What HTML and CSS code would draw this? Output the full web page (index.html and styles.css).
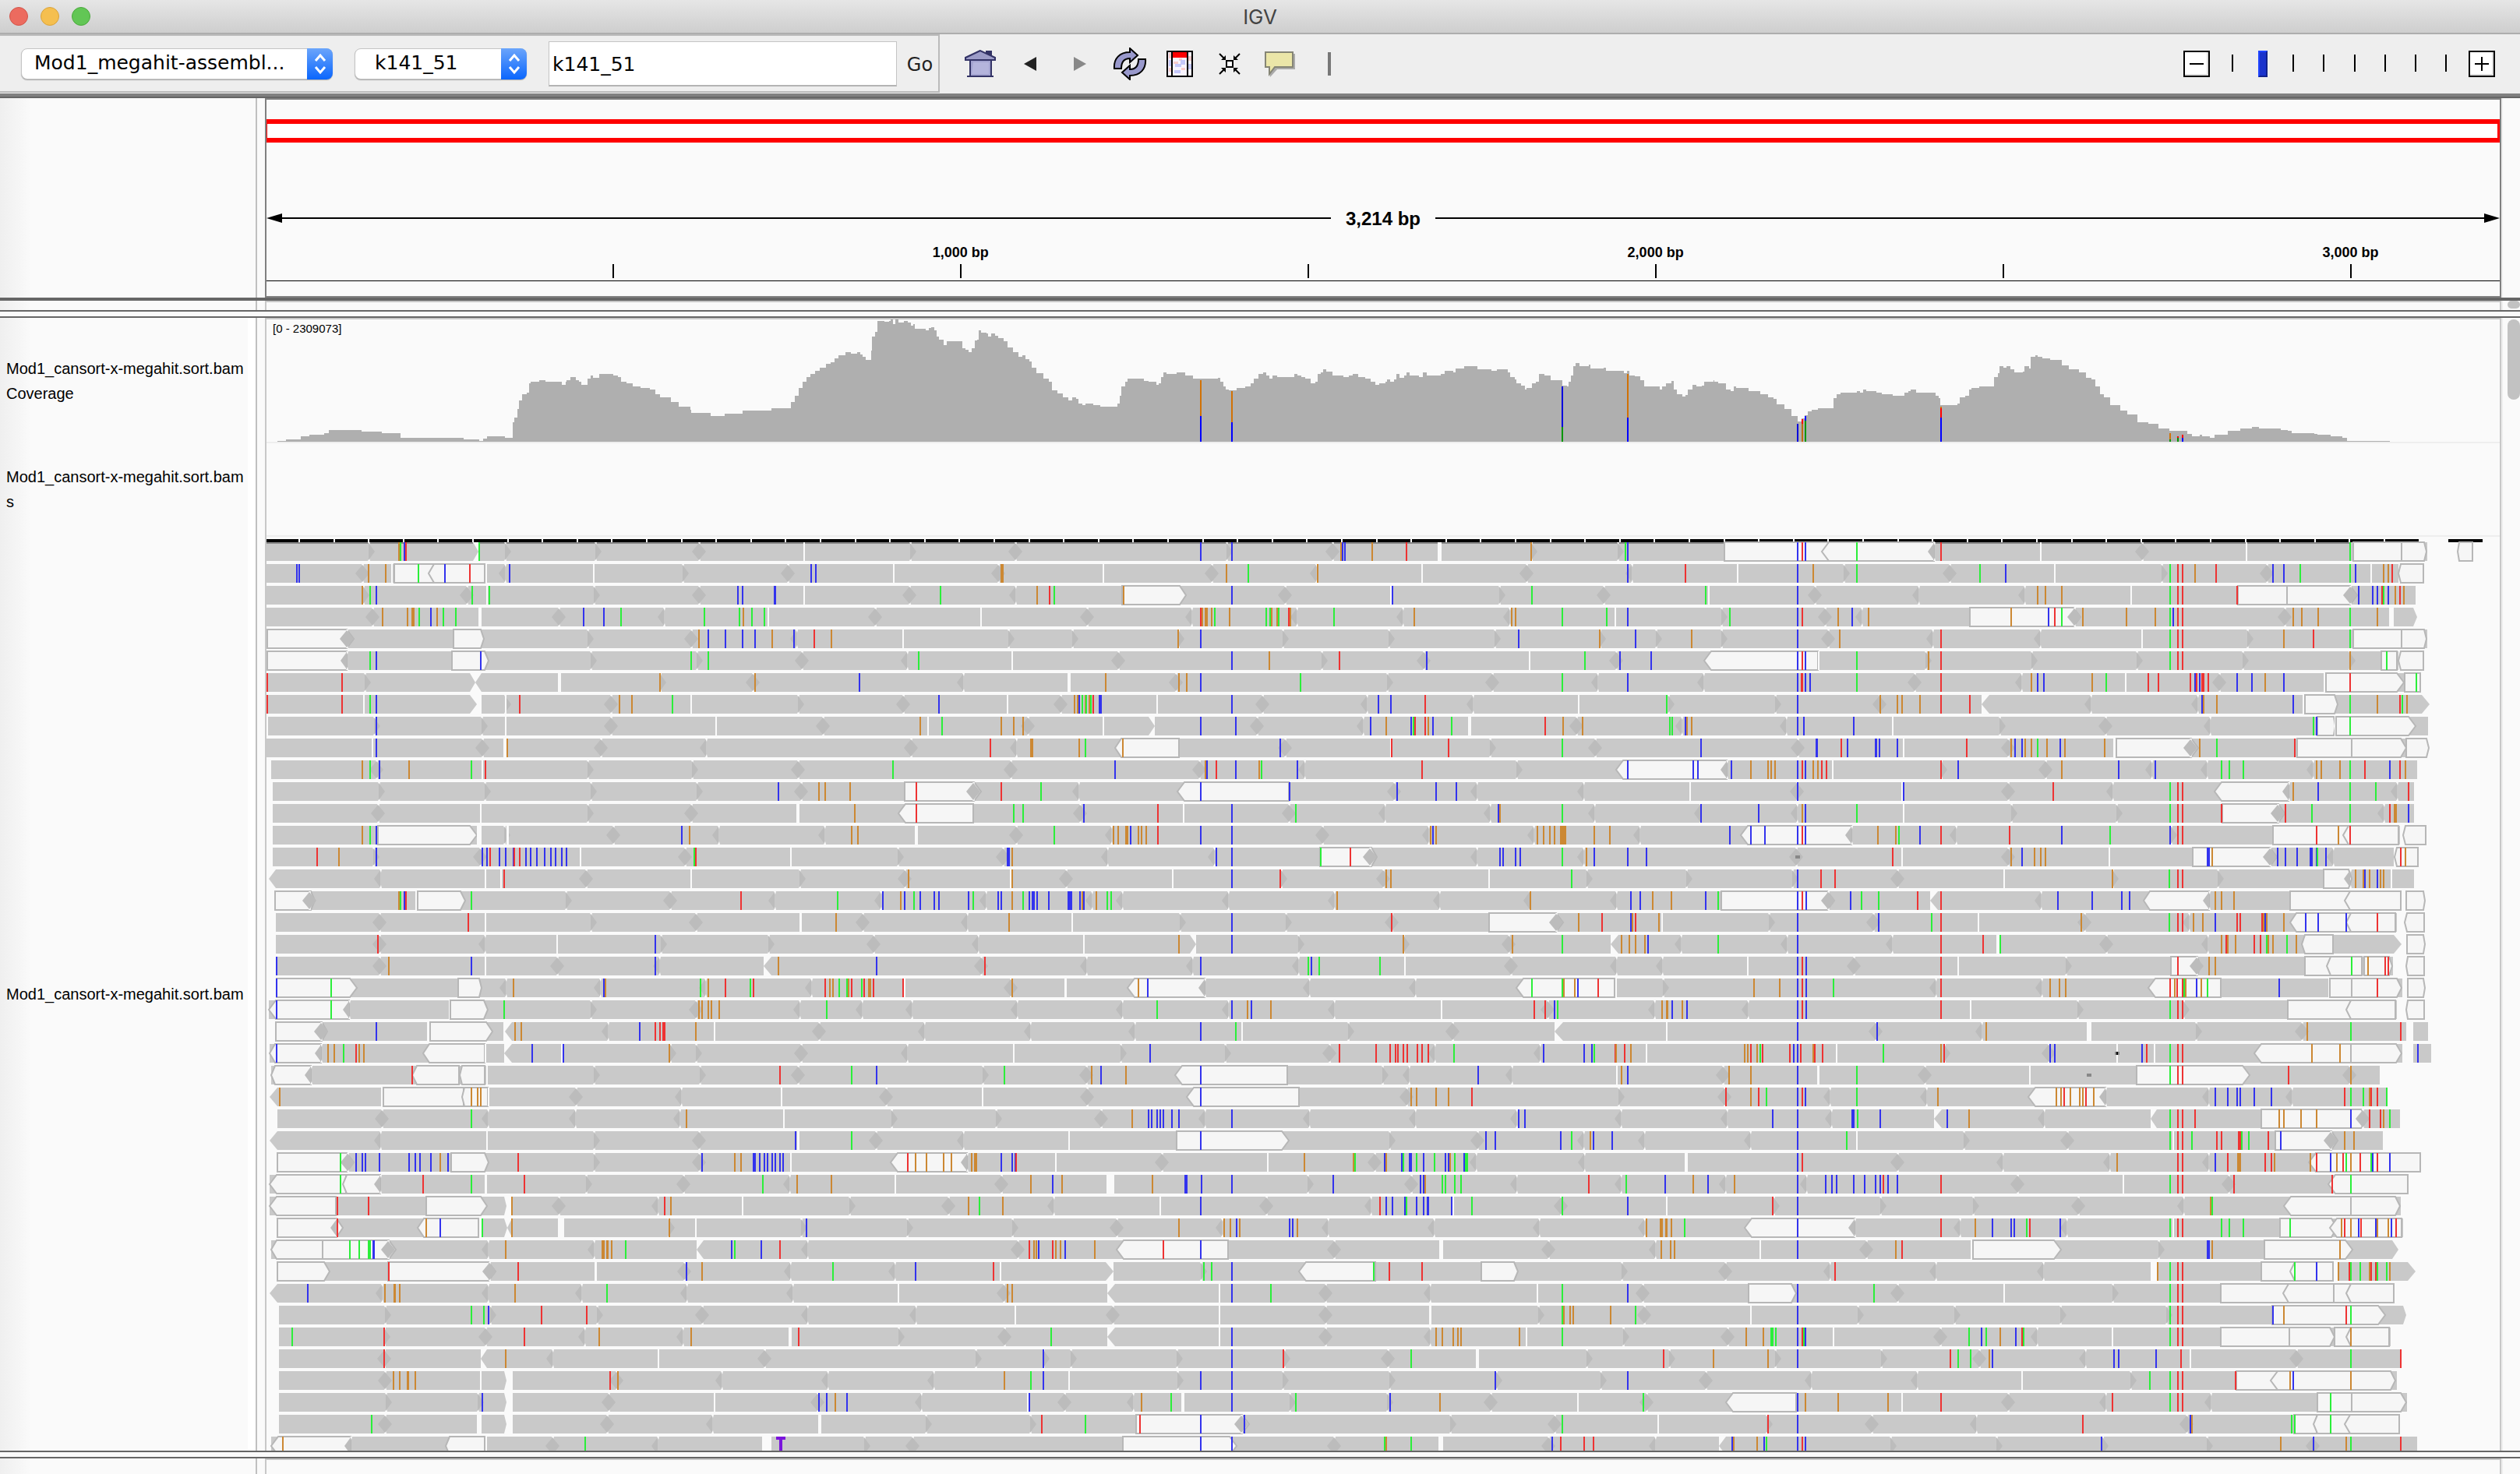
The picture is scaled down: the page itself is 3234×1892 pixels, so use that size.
FILE: index.html
```html
<!DOCTYPE html>
<html lang="en">
<head>
<meta charset="utf-8">
<title>IGV</title>
<link rel="stylesheet" href="styles.css">
</head>
<body>
<header class="titlebar">
  <div class="lights"><span class="light close"></span><span class="light minimise"></span><span class="light expand"></span></div>
  <h1 class="title">IGV</h1>
</header>

<div class="toolbar">
  <div class="locator">
    <div class="combo combo-genome">
      <select class="combo-select" aria-label="Genome"><option>Mod1_megahit-assembl...</option></select>
      <svg class="combo-arrows" viewBox="0 0 33 40" aria-hidden="true"><path d="M11 16l6-7 6 7M11 24l6 7 6-7"/></svg>
    </div>
    <div class="combo combo-chromosome">
      <select class="combo-select" aria-label="Chromosome"><option>k141_51</option></select>
      <svg class="combo-arrows" viewBox="0 0 33 40" aria-hidden="true"><path d="M11 16l6-7 6 7M11 24l6 7 6-7"/></svg>
    </div>
    <form class="search">
      <input class="search-box" type="text" value="k141_51" aria-label="Locus">
      <button class="go" type="button">Go</button>
    </form>
  </div>

  <div class="tools">
    <button class="tool" type="button" aria-label="Home">
      <svg width="42" height="38" viewBox="0 0 42 38"><path d="M7 15h28v19H7z" fill="#a3a3d0"/><path d="M12 17h20v15H10z" fill="#b4b4dc"/><path d="M28 2h8v10h-8z" fill="#333366"/><path d="M21 2L2 11v3h38v-3z" fill="#9c9cc8" stroke="#333366" stroke-width="2"/><path d="M8 15v19M35 15v19M4 35h34" stroke="#333366" stroke-width="2"/></svg>
    </button>
    <button class="tool" type="button" aria-label="Back">
      <svg width="18" height="18" viewBox="0 0 18 18"><path d="M17 0v18L1 9z" fill="#222"/></svg>
    </button>
    <button class="tool" type="button" aria-label="Forward">
      <svg width="18" height="18" viewBox="0 0 18 18"><path d="M1 0v18l16-9z" fill="#888"/></svg>
    </button>
    <button class="tool" type="button" aria-label="Refresh">
      <svg width="44" height="42" viewBox="0 0 44 42"><g fill="#9999cc" stroke="#000" stroke-width="2"><path d="M2 27C1 14 9 6 22 6V1l10 9-10 9v-5c-7 0-11 4-11 13z"/><path d="M42 15c1 13-7 21-20 21v5l-10-9 10-9v5c7 0 11-4 11-13z"/></g></svg>
    </button>
    <button class="tool" type="button" aria-label="Region of interest">
      <svg width="34" height="34" viewBox="0 0 34 34"><path d="M1 1h32v32H1z" fill="#f8f4ff"/><path d="M3 3h4v7H3zM9 14h6v3H9zM16 10h4v3h-4zM28 7h4v6h-4zM3 22h4v5H3zM19 22h5v3h-5z" fill="#f9cccc"/><path d="M3 12h4v8H3zM11 17h8v4h-8zM18 12h6v6h-6zM28 17h4v7h-4zM10 25h8v4h-8z" fill="#c5c8fb"/><path d="M8 2h18v7H8z" fill="#f00"/><path d="M1 1h32v32H1zM7 1v32M27 1v32" fill="none" stroke="#000" stroke-width="2"/></svg>
    </button>
    <button class="tool" type="button" aria-label="Fit to window">
      <svg width="28" height="28" viewBox="0 0 28 28"><path d="M10 10h8v8h-8z" fill="#fff" stroke="#000" stroke-width="2"/><path d="M1 1l7 7M27 1l-7 7M1 27l7-7M27 27l-7-7" stroke="#000" stroke-width="2"/><path d="M9 3v6H3zM19 3v6h6zM9 25v-6H3zM19 25v-6h6z"/></svg>
    </button>
    <button class="tool" type="button" aria-label="Popup text">
      <svg width="40" height="34" viewBox="0 0 40 34"><path d="M4 4h36v20H17L8 34z" fill="#aaa"/><path d="M2 2h35v19H14l-7 9v-9H2z" fill="#ebe6a8" stroke="#858575" stroke-width="2"/></svg>
    </button>
    <button class="tool" type="button" aria-label="Centre line">
      <svg width="4" height="30" viewBox="0 0 4 30"><path d="M0 0h4v30H0z" fill="#777"/></svg>
    </button>
  </div>

  <div class="zoom">
    <button class="zoom-button" type="button" aria-label="Zoom out"><svg width="18" height="18" viewBox="0 0 18 18"><path d="M0 9h18" stroke="#000" stroke-width="2"/></svg></button>
    <div class="zoom-scale">
      <div class="zoom-ticks"><i></i><i></i><i></i><i></i><i></i><i></i><i></i><i></i></div>
      <input class="zoom-slider" type="range" min="0" max="7" value="1" aria-label="Zoom level">
    </div>
    <button class="zoom-button" type="button" aria-label="Zoom in"><svg width="18" height="18" viewBox="0 0 18 18"><path d="M0 9h18M9 0v18" stroke="#000" stroke-width="2"/></svg></button>
  </div>
</div>

<section class="panel panel-ruler">
  <div class="names"></div>
  <div class="data">
    <div class="ideogram"></div>
    <div class="span-line">
      <svg class="head" viewBox="0 0 20 12"><path d="M0 6L20 0v12z"/></svg>
      <span class="rule"></span><span class="span-text">3,214 bp</span><span class="rule"></span>
      <svg class="head" viewBox="0 0 20 12"><path d="M20 6L0 0v12z"/></svg>
    </div>
    <ol class="ruler">
      <li class="tick" style="left:15.52%"></li>
      <li class="tick" style="left:31.08%">1,000 bp</li>
      <li class="tick" style="left:46.64%"></li>
      <li class="tick" style="left:62.2%">2,000 bp</li>
      <li class="tick" style="left:77.76%"></li>
      <li class="tick" style="left:93.32%">3,000 bp</li>
    </ol>
  </div>
  <div class="scroll"></div>
</section>

<section class="panel panel-empty">
  <div class="names"></div>
  <div class="data"></div>
  <div class="scroll"><div class="thumb"></div></div>
</section>
<div class="divider"></div>

<main class="panel panel-tracks">
  <div class="names names-tracks">
    <div class="name name-coverage">Mod1_cansort-x-megahit.sort.bam<br>Coverage</div>
    <div class="name name-junctions">Mod1_cansort-x-megahit.sort.bam<br>s</div>
    <div class="name name-reads">Mod1_cansort-x-megahit.sort.bam</div>
  </div>
  <div class="data">
    <div class="track coverage">
      <span class="range">[0 - 2309073]</span>
      <svg id="coverage" class="plot" viewBox="0 0 2866 157" preserveAspectRatio="none"></svg>
    </div>
    <div class="track junctions"></div>
    <div class="track reads">
      <svg id="reads" class="plot" viewBox="0 0 2866 1188" preserveAspectRatio="none"></svg>
    </div>
  </div>
  <div class="scroll"><div class="thumb thumb-tracks"></div></div>
</main>
<div class="divider"></div>

<section class="panel panel-features">
  <div class="names"></div>
  <div class="data"></div>
  <div class="scroll"></div>
</section>
<script src="tracks.js"></script>
</body>
</html>
```

FILE: styles.css
```css
* { box-sizing: border-box; }

body {
  margin: 0;
  height: 100vh;
  display: flex;
  flex-direction: column;
  overflow: hidden;
  background: #fafafa;
  color: #000;
  font-family: "Liberation Sans", Arial, sans-serif;
}

button, input, select { font: inherit; color: inherit; }

.titlebar {
  flex: none;
  height: 44px;
  display: grid;
  grid-template-columns: 1fr auto 1fr;
  align-items: center;
  padding: 0 12px;
  background: linear-gradient(#e6e6e6, #cecece);
  border-bottom: 2px solid #adadad;
}
.lights { display: flex; gap: 16px; }
.light { width: 24px; height: 24px; border-radius: 50%; border: 1px solid; }
.close { background: #ec6b5f; border-color: #d3554a; }
.minimise { background: #f5bf4f; border-color: #d9a33c; }
.expand { background: #62c655; border-color: #4aa93c; }
.title { margin: 0; padding-top: 2px; font: 400 26px/40px Inter, sans-serif; color: #444; }

.toolbar {
  flex: none;
  height: 82px;
  display: flex;
  align-items: stretch;
  background: #eee;
  border-bottom: 6px solid #808080;
  font: 25px/30px "DejaVu Sans", sans-serif;
  position: relative;
}
.toolbar::after {
  content: "";
  position: absolute;
  inset: auto 0 -6px;
  height: 2px;
  background: #666;
}
.locator {
  display: flex;
  align-items: center;
  gap: 28px;
  height: 75px;
  padding-left: 27px;
  border: 2px solid #bbb;
  border-left: 0;
}
.combo { display: grid; height: 40px; }
.combo-genome { width: 400px; }
.combo-chromosome { width: 221px; }
.combo-select, .combo-arrows { grid-area: 1 / 1; }
.combo-select {
  appearance: none;
  width: 100%;
  height: 40px;
  padding: 0 40px 2px 16px;
  border: 1px solid #c4c4c4;
  border-radius: 8px;
  background: #fff;
  box-shadow: 0 1px 1px #aaa;
}
.combo-chromosome .combo-select { padding-left: 25px; }
.combo-arrows {
  justify-self: end;
  width: 33px;
  height: 40px;
  border-radius: 0 8px 8px 0;
  background: linear-gradient(#6ba5fb, #0a66fd);
  fill: none;
  stroke: #fff;
  stroke-width: 3;
  pointer-events: none;
}
.search { display: flex; align-items: center; }
.search-box {
  width: 447px;
  height: 58px;
  padding: 2px 4px 0;
  border: 1px solid #c4c4c4;
  border-bottom: 2px solid #b4b4b4;
  background: #fff;
}
.go { width: 53px; height: 58px; padding: 2px 0 0 6px; border: 0; background: none; font-size: 24px; color: #222; }

.tools { display: flex; margin-left: 20px; }
.tool { width: 64px; padding: 0; border: 0; background: none; display: grid; place-items: center; }

.zoom { display: flex; align-items: center; gap: 23px; margin-left: auto; padding-right: 32px; }
.zoom-button {
  width: 34px;
  height: 34px;
  padding: 0;
  display: grid;
  place-items: center;
  border: 2px solid #000;
  background: #fff;
  box-shadow: inset -2px -2px #ddd;
}
.zoom-scale { display: grid; width: 286px; height: 34px; }
.zoom-ticks, .zoom-slider { grid-area: 1 / 1; }
.zoom-ticks { display: flex; justify-content: space-between; padding: 5px 5px 7px; }
.zoom-ticks i { width: 2px; background: #000; }
.zoom-slider { appearance: none; width: 100%; height: 34px; margin: 0; background: none; }
.zoom-slider::-webkit-slider-thumb {
  appearance: none;
  width: 12px;
  height: 34px;
  background: #1a33cc;
  border: 2px solid;
  border-color: #1f44ff #11228c #11228c #1f44ff;
}

.panel {
  flex: none;
  display: grid;
  grid-template-columns: 330px minmax(0, 1fr) 24px;
}
.names { border-right: 2px solid #c0c0c0; background: linear-gradient(90deg, #efefef, #fafafa 40px); }
.data { margin-left: 10px; border: 2px solid #c8c8c8; border-bottom: 0; }
.scroll { border-left: 2px solid #eee; padding-left: 6px; }
.thumb { width: 16px; height: 10px; border-radius: 8px; background: #c2c2c2; }
.thumb-tracks { height: 103px; margin-top: 2px; }

.panel-ruler { height: 260px; border-bottom: 4px solid #666; }
.panel-ruler .data { border: 2px solid #808080; }
.ideogram { height: 30px; margin-top: 25px; background: #fff; border: 6px solid #f00; border-width: 6px 3px 6px 1px; }
.span-line { display: flex; align-items: center; height: 28px; margin-top: 83px; }
.head { width: 20px; height: 12px; flex: none; }
.rule { flex: 1; height: 2px; background: #000; }
.span-text { width: 134px; padding-top: 2px; text-align: center; font-weight: 700; font-size: 24px; line-height: 28px; }
.ruler { position: relative; height: 67px; margin: 0; padding: 0; list-style: none; border-bottom: 1px solid #000; }
.tick {
  position: absolute;
  bottom: 3px;
  width: 100px;
  height: 44px;
  margin-left: -50px;
  text-align: center;
  font-weight: 700;
  font-size: 18px;
  line-height: 22px;
}
.tick::after { content: ""; position: absolute; left: 49px; bottom: 0; width: 2px; height: 18px; background: #000; }

.panel-empty { height: 14px; border-bottom: 2px solid #666; }
.divider { flex: none; height: 8px; border-bottom: 2px solid #666; }

.panel-tracks { flex: 1; min-height: 0; border-bottom: 2px solid #666; overflow: hidden; }
.panel-tracks > * { min-height: 0; }
.names-tracks { display: flex; flex-direction: column; padding-top: 2px; background: linear-gradient(90deg, #efefef, #fafafa 40px, #fafafa 318px, #fff 318px); }
.name {
  display: grid;
  align-content: center;
  width: 318px;
  padding-left: 8px;
  overflow: hidden;
  white-space: nowrap;
  font-size: 20px;
  line-height: 32px;
}
.name-coverage { height: 157px; }
.name-junctions { height: 122px; }
.name-reads { flex: 1; }
.panel-tracks .data { display: flex; flex-direction: column; overflow: hidden; }
.track { flex: none; border-bottom: 2px solid #eee; }
.coverage { height: 159px; display: grid; }
.coverage > * { grid-area: 1 / 1; }
.range { padding: 3px 8px; font-size: 15px; line-height: 18px; }
.junctions { height: 120px; }
.reads { border: 0; }
.plot { display: block; width: 100%; }
#coverage { height: 157px; }
#reads { height: 1188px; }

.panel-features { height: 20px; }
```

FILE: tracks.js
```js
const SVG = "http://www.w3.org/2000/svg";
const BG = "#fafafa";
const READ = "#c9c9c9";
const MARK = "#bcbcbc";
const BASES = { o: "#cc8833", g: "#2bef3a", b: "#3333ee", r: "#ee3333" };

function add(parent, tag, attrs) {
  const el = document.createElementNS(SVG, tag);
  for (const key in attrs) el.setAttribute(key, attrs[key]);
  parent.appendChild(el);
}
function rect(parent, x, y, width, height, fill) {
  add(parent, "rect", { x, y, width, height, fill });
}

/* Coverage: each block has an origin and a scale for x, and an offset and a scale for depth. */
const depth = [
  { x: -342, sx: 1.742, y: -290, sy: 2.613, points: "620,1166 640,1160 672,1150 692,1145 725,1138 735,1129 807,1129 808,1134 853,1134 854,1139 885,1139 896,1155 1034,1155 1036,1160 1069,1160 1072,1166 1080,1157 1088,1150 1125,1150 1128,1155 1140,1155 1146,1103 1150,1087 1156,1058 1161,1030 1168,1008 1178,1003 1182,972 1186,967 1205,967 1206,962 1219,962 1220,967 1250,967 1256,976 1264,967 1266,962 1275,962 1276,951 1285,951 1288,962 1295,967 1300,977 1309,977 1314,956 1321,946 1326,955 1335,955 1339,941 1368,941 1371,946 1382,952 1388,966 1400,972 1414,983 1432,989 1453,994 1465,1008 1475,1019 1490,1019 1500,1036 1518,1050 1544,1062 1546,1071 1567,1071" },
  { x: -342, sx: 1, y: 0, sy: 1, points: "912,124 930,121 953,117 990,114 1010,114 1015,106 1020,98 1025,88 1030,80 1035,74 1040,70 1046,66 1052,62 1060,57 1066,55 1071,50 1076,46 1085,42 1092,44" },
  { x: 758, sx: 1.4255, y: -20, sy: 3, points: "0,186 5,195 10,205 15,216 22,216 25,180 27,126 33,108 37,66 46,66 50,70 58,66 62,60 65,78 70,60 75,72 85,66 92,72 98,84 102,78 106,95 118,96 125,102 131,92 136,90 141,102 145,126 150,138 158,160 164,144 189,144 192,172 198,178 204,186 210,170 215,140 220,138 222,102 227,112 236,114 240,126 245,114 252,122 258,132 268,144 275,168 285,186 295,204 302,198 308,212 315,222 320,246 328,268 340,288 350,300 356,332 366,346 376,360 386,372 394,360 400,366 405,384 412,390 418,384 428,384 432,390 445,395 470,396 476,384 480,354 483,318 490,300 494,288 517,288 525,298 533,300 547,312 552,306 556,282 560,264 566,269 580,269 584,264 596,264 600,276 615,288 655,288 660,284 664,300 670,318 674,330 680,334 694,324 710,318 720,306 726,288 734,270 742,264 748,276 754,288 760,276 768,282 797,282 800,270 806,276 812,282 820,288 826,288 829,305 838,300 842,270 848,264 852,252 858,260 870,276 885,276 890,282 900,276 906,270 914,270 917,282 930,288 940,300 948,312 955,306 966,300 970,292 975,300 982,292 986,270 992,284 1000,276 1005,264 1010,276 1020,276 1028,282 1035,264 1042,276 1068,270 1075,258 1090,264 1095,250 1110,240 1132,240 1134,252 1158,252 1160,258 1170,252 1185,252 1190,264 1195,282 1203,290 1206,306 1215,314 1221,330 1225,324 1232,324 1235,306 1242,300 1247,270 1258,276 1268,294 1284,294 1290,314 1298,318 1302,300 1306,276 1310,240 1315,228 1322,240 1338,234 1342,250 1365,246 1370,258 1397,258 1402,268 1408,258 1412,276 1422,280 1432,294 1440,318 1462,318 1468,330 1472,318 1480,306 1490,296 1494,330 1500,348 1510,358 1516,350 1520,330 1528,312 1535,318 1545,314 1550,300 1566,294" },
  { x: 1858, sx: 1.5164, y: -20, sy: 2.24, points: "0,224 8,228 20,228 23,246 32,250 38,238 42,242 62,242 66,251 78,252 90,260 104,269 116,274 122,290 136,302 150,322 162,338 170,330 176,320 182,310 190,304 202,300 228,300 232,272 238,260 245,255 268,255 278,250 284,255 290,246 296,251 305,251 316,255 326,260 348,264 365,264 370,255 378,250 382,246 392,255 426,255 430,264 436,272 440,291 458,291 473,286 477,268 488,264 496,246 500,242 515,237 542,237 545,210 552,200 555,180 562,184 568,180 576,188 584,197 600,196 604,180 612,186 616,152 624,148 630,153 638,157 654,161 668,161 676,176 690,188 710,198 724,212 734,218 742,238 750,260 758,268 770,292 790,306 804,318 824,340 844,344 864,358 886,366 920,374 930,380 944,377 950,380 965,385 974,377 988,377 1000,366 1024,359 1046,354 1060,358 1098,358 1102,364 1116,366 1124,372 1168,373 1174,377 1192,377 1200,381 1222,386 1232,394 1314,394" }
];

const coverage = document.getElementById("coverage");
const steps = [];
for (const block of depth) {
  for (const pair of block.points.split(" ")) {
    const [px, py] = pair.split(",").map(Number);
    steps.push([Math.round(px / block.sx + block.x), Math.round(py / block.sy + block.y)]);
  }
}
let outline = `M${steps[0][0]} 157`;
for (const [x, y] of steps) outline += `H${x}V${y}`;
add(coverage, "path", { d: outline + "V157z", fill: "#afafaf" });

/* Variant columns: x, then [colour, top, bottom] for each allele. */
const variants = [
  [1198, ["#d17105", 78, 124], ["#0000ff", 124, 157]],
  [1238, ["#d17105", 92, 132], ["#0000ff", 132, 157]],
  [1662, ["#0000dd", 86, 138], ["#009600", 138, 157]],
  [1746, ["#d17105", 70, 126], ["#0000ff", 126, 157]],
  [1964, ["#0000dd", 134, 157]],
  [1970, ["#ff0000", 128, 134], ["#c06a10", 134, 157]],
  [1974, ["#0000ff", 124, 130], ["#009600", 130, 157]],
  [2148, ["#d17105", 112, 114], ["#ff0000", 114, 126], ["#0000ff", 126, 157]],
  [2442, ["#d17105", 146, 154], ["#009600", 154, 157]],
  [2452, ["#ff0000", 150, 152], ["#009600", 152, 157]],
  [2458, ["#ff0000", 148, 152], ["#0000ff", 152, 157]]
];
for (const [x, ...alleles] of variants) {
  for (const [fill, top, bottom] of alleles) rect(coverage, x, top, 2, bottom - top, fill);
}

/*
  Reads, packed in rows. Codes:
  o g b r  mismatch          w  gap            < > d  read ends
  B L R    low-quality read  p q  pointed end  e  end of row
  k K T    insertion and deletion marks
*/
const blocks = [
  { x: -2, scale: 1.96, first: 0, rows: [
    ">260 o338 g342 b350 r354 q523:538 g539 >603 >831 d1091 w1357",
    "b80 b87 d245 o261 o303 w320 B325:430 L412:553 g386 b452 r515 w557 <604 b613:618 w828 >1050 d1315 b1374 b1386",
    "o245 >246 g265 b280 d508 g522 w559 g565 >827 d1092 b1190 b1201 b1279:1286 w1357",
    "d270 o295 o359 o368:376 g389 b417 o433 g449 g480 w537:545 d739 b802 b852 g895 <1003 g1106 g1194 o1204 g1225 g1256 w1267",
    "R5:224 d206 R474:550 >811 d1073 o1091 b1115 b1158 b1201 b1232 o1276 b1331 <1337 r1382 o1425",
    "B5:205 <205 g265 b280 R471:562 b543 >819 g1072 >1086 g1115 d1350",
    "r5 r194 >251 q515:530 p530:545 w737:745 o993 >994 d1227 o1232",
    "r5 r194 w249 g265 b280 q515:533 w533:545 >603 w606 r641 d870 o892 o923 g1025 w1072 >1341",
    "w6 >275 b280 >545 w605 d870 w1135 d1403",
    "w271 b280 d547 w600:607 o609 d845 <1110",
    "w0:16 o245 g265 d281 b288 o363 g519 w546 r554 >811 >1074 d1341",
    "w0:20 >286 >553 >819 >1086 b1292 d1348 o1394 o1409 o1472",
    "w0:20 d285 w543 >811 d1073 w1337:1344 o1483",
    "w0:20 o245 g265 b280 R285:534 w534:545 >601 w607:614 d876 b1049 o1068 <1141 <1407 o1476",
    "w0:20 r131 o186 >273 b280 d540 b547 b559 r566 b590 b606 b625 r628 r641 b657 b668 b684 b704 b719 b731 b747 b758 w794 d1057 g1080 r1083 w1323",
    "w0:10 p10:27 <290 w555 w594 r601 d808 w1072 >1345",
    "w0:25 R26:126 d112 o338 g342 b350 r354 w380 R384:503 g519 >756 d1019 r1198 <1282 g1441",
    "w0:27 d288 r512 w555 >819 d1084 w1345:1351 o1437",
    "w0:27 r284 d288 <553 w735 b982 >995 >1266",
    "w0:27 b29 d288 o312 b519 w555 d735 b982 <992 p1255:1274 o1292"
  ] },
  { x: -2, scale: 1.742, first: 20, rows: [
    "w0:25 R26:206 b26 g148 R432:484 <538 o556 <749 b758 o761 g974 <985 o991 r1029 g1085 r1092 <1222 r1252 o1263 o1270 g1284 g1302 o1304 r1311",
    "w0:8 L8:188 b26 g148 <188 w412 R415:498 g535 >728 d963 o970 o977 o991 o998 o1015 <1195 g1256",
    "w0:24 R25:140 d126 b249 w362:369 R369:509 w533:537 p537:552 o559 o573 <767 b838 r873 r883 r889:896 o963 w1005 d1238",
    "w0:10 L11:126 b26 <126 o141 o155 g176 r204 o211 o221 L353:492 w493 p535:552 b597 w662:666 b668 o904 >905 >964 d1199",
    "w0:14 L14:102 <102 r329 L330:433 L435:492 w494:498 >735 >972 r1151 d1191 g1312 b1367",
    "w0:11 p11:28 o33 w261 B264:445 L440:499 o461 o475 o482 w500 d695 <930 w1155 d1389",
    "w0:28 d261 g461 <498 <693 <927 o942 w1161 >1401",
    "w0:11 p11:28 <258 w496 >735 d970 b1187 w1190:1195 g1312 d1366",
    "w0:27 R28:198 g169 d184 b204 b218 b225 b256 b322 b336 b347 b371 o392 b409 R417:500 r566 >735 d970 b977 o1051 o1064 b1091:1097 b1106 b1117 b1124 b1134 b1141 b1151 b1158 w1176 L1398:1570 r1437 o1454 o1479 o1517 o1535",
    "w0:10 L10:182 g169 L174:258 <258 r353 g461 w491:497 r580 >717 d936 g1113 <1172 o1190 o1266 w1409",
    "w0:10 L10:159 r162 r231 R360:496 q535:540 w540:550 o552 d657 <878 r894 o907 w1067 >1307",
    "w0:27 R28:175 r162 <160 L342:478 o360 b392 w479:484 g486 q535:541 p541:552 o552 w655:669 o904 >903 w964 b1211 >1199 >1436",
    "w0:14 L14:129 R129:293 g190 g211 g232 g235 b240:246 d276 <498 o538 <735 o753:759 o763:769 o775 g806 p965:980 b1043 g1050 b1110 r1151 <1213",
    "w0:27 R28:144 r277 R276:516 d502 r566 w736:742 d937 b942 o977 <1174 g1270 <1408 b1454",
    "w0:10 p10:28 b96 <261 o269 o287:293 o301 <498 o559 <707 g765 <943 <1180 w1416",
    "w0:31 >268 g461 g489 b500 >504 r618 r719 >742 d977 <1213 <1455",
    "w0:31 g61 r266 >267 d493 r580 <714 o747 <934 o953 w1171:1177 r1193 >1417",
    "w0:31 d266 r266 p483:497 o538 <642 w880 d1117",
    "w0:31 d268 o288 o301 o317:323 o336 w482 q535:540 w540:554 r772 d785 o789 <1020 <1257 <1495",
    "w0:31 >270 >476 b486 q535:540 w540:554 d768 w1005 d1235 b1238 b1256 o1276 b1301 <1466",
    "w0:31 g238 d268 w474:484 q535:540 w540:554 d765 <1000 w1237:1244 >1478",
    "w0:14 L14:191 o40 <191 L405:492 w495 d643 g716 <878 w1112:1132 T1153 >1339 d1448"
  ] },
  { x: 758, scale: 1.4255, first: 0, rows: [
    ">97 d289 b628 b685 >676 d869 o885 b888 b893 o942 r1005 w1062:1069 o1233 >1233 >1392 g1406 b1410",
    "w67 d258 o262:268 w451 d648 o675 g716 o842 <839 w1033 d1225 b1410 <1417 r1515",
    "d96 g152 <290 o329 r352 g360 R484:602 o487 b685 d783 w976 b979 >1175 g1235 d1366 g1552 w1558",
    "d33 w226 d420 <612 r629 o631 o636:641 o648 g654 o682 g748 g756 o759 o768 g771 r790 o793 <804 g873 <998 o1019 <1193 o1198 o1204 g1290 g1372 w1387 b1410",
    "w84 >277 >393 o588 >588 b628 >779 >972 >1166 b1210 o1358 >1359 b1424 >1461 o1526",
    "<91 g112 w283 d478 b685 o754 >850 r882 d1036 b1042 w1230 g1332 d1388 b1395 b1452 L1550:1757"
  ] },
  { x: 758, scale: 1.4, first: 6, rows: [
    "b4 <190 w378:384 o446 d573 o578 o592 b617 g796 >952 d1141 g1267 <1330 b1384 <1520",
    "d82 b147 w270 d366 o390 o396 b399 g404 o410 g412 o417 g420 r424 b434:440 w539 b673 d728 <915 b936 b959 r1020 <1106 w1297 g1454 >1458",
    "o113 w127 g152 o259 o281 o298 d307 w443 q524:535 b617 b681 d718 <908 b922 o950 b995 g1000 r1003 r1020 o1026 b1034 g1068 w1098:1103 r1236 o1269 d1292 o1303 g1460 g1465 <1481 b1488 o1491 o1499",
    "d96 r239 <286 o311:316 o399 g410 L464:578 o477 b760 d768 w959 r961 r1062 >1137 g1267 d1326 b1516",
    "g65 d276 b463 d614 o626 b628 r645 b681 o723 g726 b791 <804 r1015 >1185 L1363:1563 b1384 b1502 b1510",
    "R86:222 r107 d208 r259 g331 <398 L575:776 b617 b777 d965 b970 b1040 b1076 <1113 <1305 w1496",
    "L74:208 r107 g281 g298 d400 b407 r541 w586 b673 d776 g788 <948 <1137 b1152 o1155 g1267 <1325 b1516 <1515",
    "o1 w104:109 d286 g354 <457 o460 o469 o482:487 b491 o505 o511 o519 r541 b617 b673 d836 <1026 o1031 b1034 o1040 <1215 o1222 o1233 o1244 o1253 o1263:1274 o1325 o1353 <1406",
    ">73 d262 b269:274 o278 <450 <641 b645 b673 R831:934 g833 r886 d921 <1113 b1155 b1160 b1183 b1191 g1267 <1305 o1311 b1325 b1384 b1418",
    "d86 o93 w276 o278 d375 w567 b673 r760 >761 d945 o950 o959 w1135 g1284 >1311 >1490",
    "<42 b46 o79 b85 g102 b113 b138 b147 b200 g208 <231 b253 b259 o278 g298 b309 b314:319 b323 b345 b378:386 b401 o404 b407 <421 o430 g449 g457 <476 <667 <857 o863 <1046 o1210 <1208 <1364 b1390 b1407 o1429 o1463",
    "d10 <198 o273 w387 >580 b673 >770 d961 r961 R1136:1269 d1256 o1297 r1339 b1390 o1393 r1398 o1440 w1446",
    "d29 <217 w407 o578 q598:609 b673 >792 o981 >982 d1171 o1177 g1267 p1354:1368 o1373 o1387 o1398 o1415 b1421 <1480",
    "b35 d222 r230 <412 <602 b617 <792 g810 b816 g830 g939 w984 d1175 <1364 <1446",
    "g9 r12 o20:25 r29 r82 w86 d276 o278 w372:377 L486:625 o505 b522 <625 <812 <1003 L1184:1361 g1213 g1267 o1270 o1289 b1295 r1331 w1364 >1448",
    "<8 <98 <287 <476 g539 <667 b673 o701 b709 o743 <857 w1048:1052 r1216 r1236 d1241 b1253 g1258 <1432 o1446 o1453:1458 b1465 o1482 b1491",
    "<120 <311 <498 b617 g681 w691 >882 d1069 p1253:1268 w1454",
    "<90 w281 >473 b527 >661 d849 r866 r933 r957 r967 r972 r981 r989 r1006 r1015 r1026 <1038 g1073 <1227 b1233 b1306 b1320 g1325 r1362 o1364 r1379 o1390 w1418"
  ] },
  { x: 858, scale: 1.2645, first: 23, rows: [
    "o1314 o1319 r1324 o1334 g1339 r1343 r1387 b1394 b1400 r1405 o1425 r1427 r1440 w1463",
    ">77 g112 d245 o254 b269 o310 L390:572 b431 >726 <769 b881 <936 w1106 o1114 b1124 d1278 o1288 o1324 b1400 w1431:1435 g1496",
    "w77 d247 L409:591 b431 d765 o772 o782 o813 o833 r871 >1109 d1281 r1284 o1324 r1336 g1349 b1400 r1407 b1412 <1452 g1496",
    ">99 d269 o320 b347 b352 b360 b365 b370 b385 b396 <438 b482 <607 <779 <943 b947 b957 <1113 <1285 b1359 b1400 <1454 b1487:1492 g1497",
    "<46 w218 R392:574 b431 >737 d880 b894 b909 b1015 g1033 <1052 o1063 b1068 b1099 <1151 <1323 b1400 g1480 w1496",
    "<52 o59 o63:68 b108 b125 b130 r132 w196 d368 w540 o600 g681 o679 d713 b729 o732 b757 g760 b769:774 g782 b793 g810 b828 b833 g843 o836 b858 g860:865 <878 <1053 w1216:1221 b1400 r1407",
    "d108 o155 b191 o206 w278:291 o353 b405:410 b433 b482 >604 b646 d773 b788 b793 o796 g823 g828 g843 g853 <943 r1061 <1113 g1121 b1185 o1230 b1255 <1282 o1298 b1400 <1414 b1445 b1455 b1463 b1491 b1509",
    "d22 o54 g72 o110 <192 w365 b431 d538 <707 r722 b732 b742 b762 g765 b782 b793 b798:802 b838 w841 g871 g1018 d1016 b1124 w1187 r1359 >1361 b1400",
    ">125 d294 o396 <465 o469 o479 b489 o494 b575 b580 o588 <637 <809 <980 <1151 o1154 o1176:1181 o1185:1189 o1195 g1217 L1314:1492 b1400 <1492",
    "d134 r153 o160 o165 b168 r191 o196 o203 b211 o259 L294:476 r370 b431 d648 w818:824 d995 <1168 o1179 o1194 o1200 w1339 b1400 d1511",
    "r95 w106 q277:289 >431 g436 g449 b482 L590:714 g712 r737 r790 R887:946 >1114 d1282 <1452 r1460",
    "d111 o117 o125 p280:292 w461 b482 g545 d633 <803 w978 g1018 b1124 d1148 R1320:1397 b1400",
    "w130 d288 w461 d633 w802:806 >979 g1018 o1021 o1030 o1035 o1096 g1137 d1151 w1324 b1400 >1497",
    "d112 g188 p280:292 w461 b482 d633 <803 o813 o823 o841 o848 o853 o949 w960 g1018 >1116 d1286 o1316 o1344 g1356:1361 g1365 b1400 r1407 g1410 b1412 w1458",
    ">66 b176 >176 >220 >392 b482 r565 >566 d735 g772 w878:883 >1057 r1182 >1191 o1263 o1352 >1363 b1400",
    "o112 g155 b176 w218 >393 b431 b482 >564 >737 b909 >910 >1080 b1124 d1250 <1421",
    "w150 b153 d210 <321 o335 g383 w400:405 b482 >575 g586 >733 b739 o820 d902 w1043 g1150 d1154 L1284:1397 b1400 o1412 o1465",
    ">154 r173 g244 R326:509 r332 b431 d497 b502 >836 d1005 g1018 w1174 r1352 >1349 b1400",
    "R305:489 b431 b482 d648 g729 o732 g772 w817:824 d995 b1002 r1015 r1053 r1068 <1168 p1272:1284 b1293 o1296 o1334 b1346 g1349 b1400 r1407 b1412"
  ] },
  { x: 1858, scale: 1.5164, first: 0, rows: [
    "B19:222 L209:428 b162 r171 b177 g277 <428 r441 w635 d832 w1035 g1238 B1243:1338 R1338:1386 e1388 L1447:1475",
    "w46 b162 o192 >252 g277 d458 g517 b565:569 w662 >870 g887 r902 r911 o936 r977 d1075 b1087 b1108 g1141 g1238 b1248 w1278 o1302 o1311 r1320 e1331 L1332:1380",
    "b162 d195 <397 <604 o629 o644 o677 w811 g887 r902 r911 r1017 B1019:1114 R1114:1251 d1238 b1254 b1281 b1290 r1299 g1302 b1311 o1326 r1335 o1342 e1365",
    ">13 g31 b162 r171 d215 o241 b268 <287 o301 R498:713 o577 b650 r662 g677 d700 o717 o802 o859 g887 b893 r902 r911 d1110 o1126 o1144 o1175 g1238 o1290 w1313:1322 e1368 q1360:1368",
    ">14 b162 d221 o244 <425 r441 <634 w832 g887 r902 r911 >1037 o1108 r1166 g1238 B1243:1338 R1338:1386 e1388",
    "b162 r171 b177 w203 g277 o417 >411 r441 >617 >822 g887 r902 r911 >1028 o1238 >1236 B1298:1328 g1308 e1331 L1332:1380",
    "b162 r168:173 b177 b186 g277 d390 r441 <597 o617 b629 b641 o735 g762 w801 r844 r865 r926 b936 r938 b944 r950 r953 r962 d983 b1017 b1047 o1072 b1108 w1187 R1191:1342 r1238 e1344 B1343:1374 g1366",
    ">118 b162 d322 o323 o356 o365 o401 r441 r498 p520:535 <733 <940 b950 o953 o978 b1126 w1147 R1149:1213 g1238 o1290 r1335 g1339 o1348 e1392 q1377:1392",
    "<140 b162 b174 b271 w347 >555 d761 <964 g1166 b1172 R1173:1208 w1208 R1210:1365 g1238 e1389",
    "d162 b197:202 r247 b259 b312:317 b322 b356 w368 r492 d572 o577 b586 b599 o605 o617 g629 o647 b674 o683 o759 w776:781 R782:941 d926 o944 g978 r1129 B1134:1240 e1347 R1240:1346 R1346:1390",
    "<25 b34 o71 o104 o110 o119 b162 r171 b177 o192 o201 r210 r219 w231 r441 >442 b474 d645 o677 b787 <850 b859 <958 g987 g1002 g1029 <1165 o1172 o1181 o1217 g1238 r1266 b1314 r1335 o1345 e1368",
    "d160 b162 w366 b368 d571 r659 <775 g887 r902 r911 L973:1117 <1117 o1126 b1175 g1238 g1287 <1328 r1351 e1362",
    "b86 <161 o171 b177 g277 w368 >577 >783 g887 r902 r911 r987 R988:1110 d1097 r1111 g1163 g1238 <1302 r1314 o1323:1328 b1351 e1362",
    "b31 L51:267 b71 b98 b162 r171 b177 <267 o319 o353 g359 b401 r441 <470 r574 b677 g771 b887 >888 r902 r911 B1088:1238 L1223:1332 r1172 o1214 r1238 e1334 L1341:1384"
  ] },
  { x: 1838, scale: 1.6, first: 14, rows: [
    "d200 k203 r398 w417 d635 o641 b664 o689 o702 o712 w843 R1014:1187 b1043:1049 o1054 d1173 b1188 b1204 b1228 b1254:1260 b1268 g1271 b1288 <1303 e1427 L1428:1476 r1441 o1451",
    ">192 b203 r251 r280 d408 w627 o849 >849 g967 r984 r993 >1065 R1283:1340 <1337 o1348 o1364 b1368 o1377 b1393 o1400 o1407 w1422 e1469",
    "b14 g40 R47:279 b203 r212 b220 d265 b312 g334 g369 r449 p475:491 r498 <703 b738 b808 b868 b884 L913:1048 <1048 o1060 o1073 o1099 B1215:1340 L1326:1441 e1443 R1452:1491",
    ">144 b203 d358 b369 g478 r498 w575 o785 d792 g967 r984 r993 <1007 o1016 o1035 b1060 r1106 r1112 r1157 o1160 b1163 o1166 o1201 L1215:1340 L1330:1431 b1246 b1272 b1330 r1393 e1433 L1450:1489",
    "g40 <180 b203 <397 r498 r584 w611:617 g619 d836 <1045 o1073 r1083 o1086 o1103 r1140 r1153 g1166 o1169 o1179 g1208 o1227 L1238:1303 e1443 q1427:1443 R1454:1491",
    "w100 b203 r212 b220 d319 r498 w533 >753 R969:1030 d1022 r984 o1048 o1060 B1244:1298 L1290:1362 R1366:1424 g1340 o1374 r1410 r1416 e1426 L1453:1489",
    "o113 o167 b203 r212 b220 g276",
    "<100 b203 r212 b220",
    "b203"
  ] },
  { x: 2058, scale: 1.88, first: 20, rows: [
    "<158 r171 <413 o434 o457 o472 L671:846 r724 o735 r741 r754 g757 o761 b788 o799 g814 b987 w1107 B1109:1162 R1162:1282 r1224 e1284 R1297:1339",
    "r171 w242 >500 g724 r743 r754 >755 B1008:1160 L1148:1268 e1270 L1294:1336",
    "d14 b17 <268 o280 w523:534 >786 d1042 o1055 g1160 r1280 w1294:1310 e1346",
    "g32 o171 r178 >179 d430 b434 b445 w596 K596 b656 r668 w686 g724 r743 r754 L927:1160 R1160:1282 o1066 o1134 w1284:1310 b1322 e1354",
    "d132 w386 k528 R643:915 g724 r743 r754 r1009 d1157 o1160 e1230",
    "<135 o163 L382:568 o449 o461 r468 o483 o506 o513 r521 o539 <568 <815 b833 b863 b885 b893 b927 b968 <1018 r1145 g1160 g1190 o1205 r1209 r1224 g1246 e1248",
    "b24 p155:173 b186 o239 <420 p677:692 g724 r743 r754 r784 R944:1202 d1188 o987 o998 o1040 o1077 b1160 r1205 r1231 o1239 g1254 e1278",
    ">226 d476 g724 w731 r743 r754 g776 r837 r848 r888:894 g897 g911:916 r961 R978:1128 b991 d1112 o1145 o1168 e1237",
    "d66 <320 <577 o596 r743 r754 <815 b833 r863 o885:894 r953 r968 o976 o1062 L1058:1328 r1077 b1111 o1126 r1141 g1149 o1160 r1182 g1209 b1213 r1224 b1254 e1329",
    "b13 b24 r32 b43 b66 r171 d355 w611 g724 r743 r754 d865 r878 r1115 L1106:1298 g1160 e1300",
    ">24 >248 d502 <756 o822 g825 L998:1160 R1160:1279 e1281",
    "r171 <217 o254 b295 b340 b347 g378 r385 b458 <473 g724 w731 r743 r754 g848 g867 g900 R989:1127 g1013 L1110:1283 o1138 r1145 o1160 b1179 r1184 b1220 o1223 o1250 b1258 r1269 e1285",
    "o62 r77 w245 R248:460 >696 b812:819 o825 R951:1163 o1134 e1275 q1260:1275",
    "<158 <418 w677:692 o694 g724 r743 r754 B944:1022 L1014:1117 g1025 b1077 w1119:1128 o1130 r1156 g1160 g1182 o1205 r1209 r1220 g1224 g1246 o1254 e1316 q1297:1316",
    "g9 d66 w324 >585 g724 r743 r754 B846:1012 L997:1119 B1119:1160 L1148:1264 e1266",
    ">203 >459 g724 >714 r743 r754 R970:1242 b972 o998 r1149 g1160 e1294 q1286:1294",
    "d169 g239 b269 g280 o314 b351 r367 g370 <402 w585 g724 r743 r754 B846:1012 R1012:1120 B1120:1160 L1148:1253 o1160 e1255",
    ">26 r194 g213 g242 d263 o288 b295 <518 b588 b600 b690 r750 w773 d1028 g1160 r1280 e1282",
    "<112 w367 >628 g675 g724 r743 r754 r882 B884:984 L967:1160 R1160:1268 o1013 b1021 o1160 e1270",
    "o43 w77 r171 d333 <567 r585 g724 r743 r754 <822 B1079:1162 R1162:1294 g1111 e1296",
    "d3 <256 r513 d764 b773 o776 g1017 B1022:1077 L1069:1162 L1144:1276 g1025 g1111 e1278",
    ">49 >305 b558 >560 >813 o991 d1067 b1070 o1149 g1160 r1280 e1320"
  ] }
];

const ROWS = 42;
const PITCH = 28;
const HEIGHT = 24;
const TOP = 7;
const WIDTH = 2866;
const reads = document.getElementById("reads");

for (let i = 0; i < ROWS; i++) rect(reads, 0, TOP + i * PITCH, 2820, HEIGHT, READ);

/* Collapsed bar of downsampled regions, one piece for each 50 bp. */
rect(reads, 0, 3, 2762, 4, "#000");
rect(reads, 2800, 3, 44, 4, "#000");
for (let x = 41; x < 2762; x += 44.6) rect(reads, Math.round(x), 3, 2, 4, BG);
rect(reads, 0, 7, 2675, 2, "#888");

function drawShape(code, a, b, y) {
  const mid = y + HEIGHT / 2;
  const end = y + HEIGHT;
  const notch = (x) => add(reads, "path", { d: `M${x - 1} ${y}h3l-1 4zM${x - 1} ${end}h3l-1-4z`, fill: BG });
  if (code === "w") rect(reads, a, y, b - a, HEIGHT, BG);
  if (code === "e") rect(reads, a, y, WIDTH - a, HEIGHT, BG);
  if (code === "p" || code === "q") {
    rect(reads, a, y, b - a, HEIGHT, BG);
    const [tip, base] = code === "p" ? [a, b] : [b, a];
    add(reads, "path", { d: `M${tip} ${mid}L${base} ${y}V${end}z`, fill: READ });
  }
  if (code === "<") { notch(a); add(reads, "path", { d: `M${a} ${y + 1}l-8 11 8 11z`, fill: MARK }); }
  if (code === ">") { notch(a); add(reads, "path", { d: `M${a} ${y + 1}l8 11-8 11z`, fill: MARK }); }
  if (code === "d") { notch(a); add(reads, "path", { d: `M${a} ${y + 1}l9 11-9 11-9-11z`, fill: MARK }); }
  if ("BLR".includes(code)) {
    const tip = Math.min(9, Math.round((b - a) / 10));
    const l = code === "L" ? tip : 0;
    const r = code === "R" ? tip : 0;
    add(reads, "path", {
      d: `M${a + l} ${y}H${b - r}L${b} ${mid}L${b - r} ${end}H${a + l}L${a} ${mid}z`,
      fill: "#f6f6f6", stroke: "#b7b7b7", "stroke-width": 2
    });
  }
}

function drawMark(code, a, b, y) {
  if (BASES[code]) rect(reads, a, y, b - a, HEIGHT, BASES[code]);
  if (code === "k") rect(reads, a - 2, y + 10, 6, 4, "#888");
  if (code === "K") { rect(reads, a - 2, y + 10, 6, 4, "#888"); rect(reads, a, y + 10, 2, 4, "#000"); }
  if (code === "T") { rect(reads, a - 5, y, 12, 4, "#7a14dc"); rect(reads, a - 1, y, 4, HEIGHT, "#7a14dc"); }
}

for (const draw of [drawShape, drawMark]) {
  for (const block of blocks) {
    block.rows.forEach((row, i) => {
      for (const item of row.split(" ")) {
        const code = item[0];
        const [from, to] = item.slice(1).split(":").map((v) => v / block.scale + block.x);
        const centred = to === undefined && "wogbrkKT".includes(code);
        const a = Math.round(centred ? from - 1 : from);
        const b = to === undefined ? a + 2 : Math.round(to);
        draw(code, a, b, TOP + (block.first + i) * PITCH);
      }
    });
  }
}
```
